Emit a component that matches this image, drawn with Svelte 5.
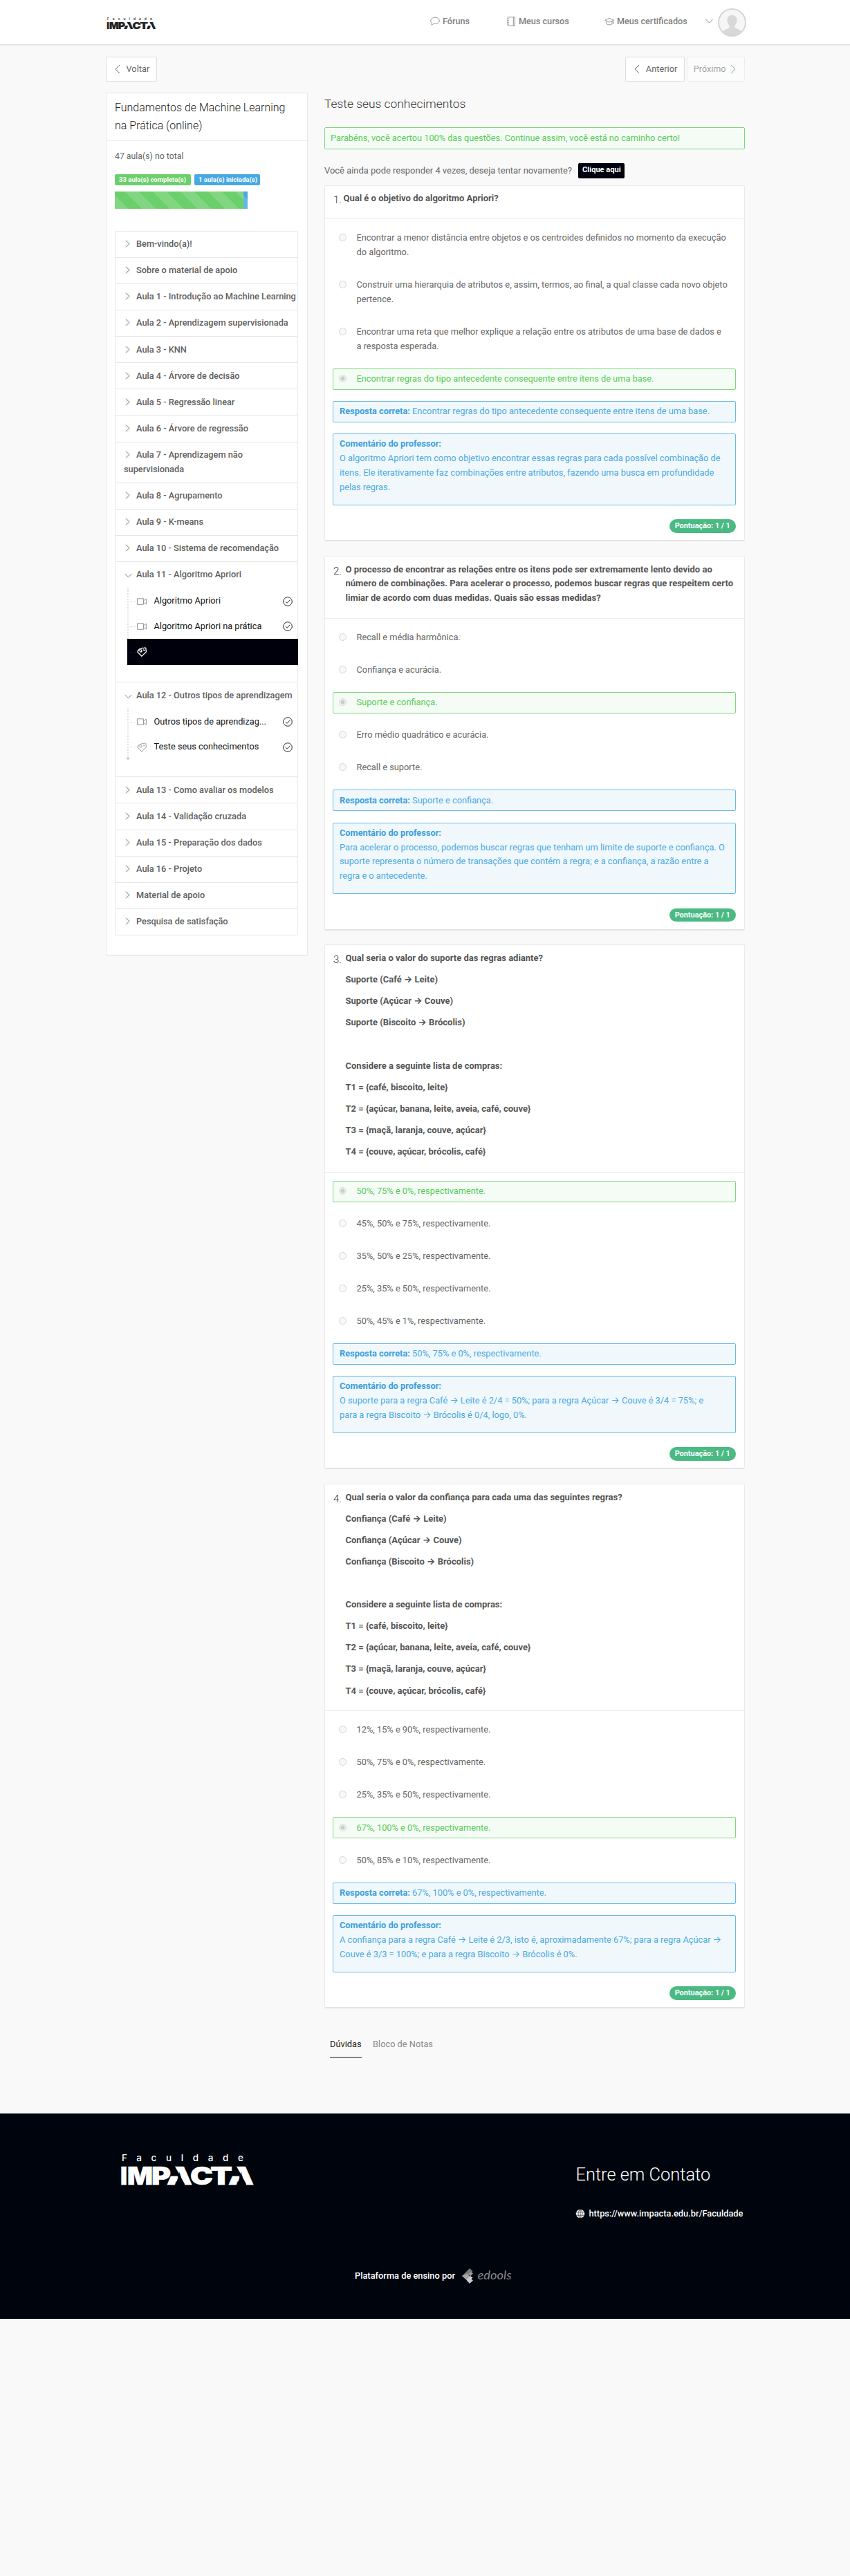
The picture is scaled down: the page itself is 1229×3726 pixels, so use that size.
<script lang="ts">
  const lessonsBefore = [
    'Bem-vindo(a)!',
    'Sobre o material de apoio',
    'Aula 1 - Introdução ao Machine Learning',
    'Aula 2 - Aprendizagem supervisionada',
    'Aula 3 - KNN',
    'Aula 4 - Árvore de decisão',
    'Aula 5 - Regressão linear',
    'Aula 6 - Árvore de regressão',
    'Aula 7 - Aprendizagem não supervisionada',
    'Aula 8 - Agrupamento',
    'Aula 9 - K-means',
    'Aula 10 - Sistema de recomendação'
  ].map((title) => ({ title, items: [] as any[] }));

  const lessonsAfter = [
    'Aula 13 - Como avaliar os modelos',
    'Aula 14 - Validação cruzada',
    'Aula 15 - Preparação dos dados',
    'Aula 16 - Projeto',
    'Material de apoio',
    'Pesquisa de satisfação'
  ].map((title) => ({ title, items: [] as any[] }));

  const modules = [
    ...lessonsBefore,
    {
      title: 'Aula 11 - Algoritmo Apriori',
      items: [
        { icon: 'video', label: 'Algoritmo Apriori', done: true },
        { icon: 'video', label: 'Algoritmo Apriori na prática', done: true },
        { icon: 'quiz', label: '', active: true }
      ]
    },
    {
      title: 'Aula 12 - Outros tipos de aprendizagem',
      last: true,
      items: [
        { icon: 'video', label: 'Outros tipos de aprendizag...', done: true },
        { icon: 'quiz', label: 'Teste seus conhecimentos', done: true }
      ]
    },
    ...lessonsAfter
  ];

  const shopping = [
    'Considere a seguinte lista de compras:',
    'T1 = {café, biscoito, leite}',
    'T2 = {açúcar, banana, leite, aveia, café, couve}',
    'T3 = {maçã, laranja, couve, açúcar}',
    'T4 = {couve, açúcar, brócolis, café}'
  ];

  const questions = [
    {
      prompt: [['Qual é o objetivo do algoritmo Apriori?']],
      options: [
        ['Encontrar a menor distância entre objetos e os centroides definidos no momento da execução', 'do algoritmo.'],
        ['Construir uma hierarquia de atributos e, assim, termos, ao final, a qual classe cada novo objeto', 'pertence.'],
        ['Encontrar uma reta que melhor explique a relação entre os atributos de uma base de dados e', 'a resposta esperada.'],
        ['Encontrar regras do tipo antecedente consequente entre itens de uma base.']
      ],
      correct: 3,
      comment: [
        'O algoritmo Apriori tem como objetivo encontrar essas regras para cada possível combinação de',
        'itens. Ele iterativamente faz combinações entre atributos, fazendo uma busca em profundidade',
        'pelas regras.'
      ]
    },
    {
      prompt: [[
        'O processo de encontrar as relações entre os itens pode ser extremamente lento devido ao',
        'número de combinações. Para acelerar o processo, podemos buscar regras que respeitem certo',
        'limiar de acordo com duas medidas. Quais são essas medidas?'
      ]],
      options: [
        ['Recall e média harmônica.'],
        ['Confiança e acurácia.'],
        ['Suporte e confiança.'],
        ['Erro médio quadrático e acurácia.'],
        ['Recall e suporte.']
      ],
      correct: 2,
      comment: [
        'Para acelerar o processo, podemos buscar regras que tenham um limite de suporte e confiança. O',
        'suporte representa o número de transações que contém a regra; e a confiança, a razão entre a',
        'regra e o antecedente.'
      ]
    },
    {
      prompt: [
        'Qual seria o valor do suporte das regras adiante?',
        'Suporte (Café → Leite)',
        'Suporte (Açúcar → Couve)',
        'Suporte (Biscoito → Brócolis)',
        '\u00a0',
        ...shopping
      ].map((p) => [p]),
      options: [
        ['50%, 75% e 0%, respectivamente.'],
        ['45%, 50% e 75%, respectivamente.'],
        ['35%, 50% e 25%, respectivamente.'],
        ['25%, 35% e 50%, respectivamente.'],
        ['50%, 45% e 1%, respectivamente.']
      ],
      correct: 0,
      comment: [
        'O suporte para a regra Café → Leite é 2/4 = 50%; para a regra Açúcar → Couve é 3/4 = 75%; e',
        'para a regra Biscoito → Brócolis é 0/4, logo, 0%.'
      ]
    },
    {
      prompt: [
        'Qual seria o valor da confiança para cada uma das seguintes regras?',
        'Confiança (Café → Leite)',
        'Confiança (Açúcar → Couve)',
        'Confiança (Biscoito → Brócolis)',
        '\u00a0',
        ...shopping
      ].map((p) => [p]),
      options: [
        ['12%, 15% e 90%, respectivamente.'],
        ['50%, 75% e 0%, respectivamente.'],
        ['25%, 35% e 50%, respectivamente.'],
        ['67%, 100% e 0%, respectivamente.'],
        ['50%, 85% e 10%, respectivamente.']
      ],
      correct: 3,
      comment: [
        'A confiança para a regra Café → Leite é 2/3, isto é, aproximadamente 67%; para a regra Açúcar →',
        'Couve é 3/3 = 100%; e para a regra Biscoito → Brócolis é 0%.'
      ]
    }
  ];

  // Wordmark letters: glyph, left edge, drawn width.
  const letters: [string, number, number][] = [
    ['I', -2, 10], ['M', 8, 37], ['P', 43, 28], ['C', 99, 33], ['T', 128, 32]
  ];
</script>

{#snippet logo()}
  <svg class="logo" viewBox="0 0 190 44" role="img" aria-label="Faculdade Impacta">
    <text class="logo-small" x="0" y="10" textLength="176">Faculdade</text>
    {#each [65, 154] as x}
      <g transform="translate({x} 0)">
        <text class="logo-big" x="0" y="44" textLength="37" lengthAdjust="spacingAndGlyphs">A</text>
        <path class="logo-cut" d="M-2 16H11L19.500 31L26 43V46H12.500L17 31.500H-2Z" />
      </g>
    {/each}
    {#each letters as [ch, x, w]}
      <text class="logo-big" {x} y="44" textLength={w} lengthAdjust="spacingAndGlyphs">{ch}</text>
    {/each}
  </svg>
{/snippet}

{#snippet chevron(dir: string)}
  <svg class="chev {dir}" viewBox="0 0 8 14"><path d="M1 1L7 7L1 13" /></svg>
{/snippet}

{#snippet lines(parts: string[])}
  {#each parts as part, i}{#if i}<br />{/if}{part}{/each}
{/snippet}

<header>
  <div class="wrap bar">
    <a class="brand" href="#top">{@render logo()}</a>
    <nav>
      <a class="forums" href="#forums">
        <svg class="ico" viewBox="0 0 14 14"><path d="M7 1.2C10.500 1.200 13.300 3.200 13.300 5.900S10.500 10.500 7 10.500C6.300 10.500 5.600 10.400 5 10.300C4.200 11.300 3 12 1.900 12.100C2.500 11.300 2.800 10.400 2.600 9.400C1.400 8.500 .7 7.300 .7 5.900C.7 3.200 3.500 1.200 7 1.200Z" /></svg>
        Fóruns
      </a>
      <a class="courses" href="#courses">
        <svg class="ico" viewBox="0 0 14 14"><path d="M2.500 .8H12.500V13.200H2.500ZM10.300 .8V13.200M1 3H3.600M1 5.700H3.600M1 8.400H3.600M1 11H3.600" /></svg>
        Meus cursos
      </a>
      <a class="certs" href="#certificates">
        <svg class="ico" viewBox="0 0 14 14"><path d="M7 2.200L13.300 5.200L7 8.200L.7 5.200ZM3 6.500V10.500C4 12.400 10 12.400 11 10.500V6.500M12.800 5.500V11" /></svg>
        Meus certificados
      </a>
      <svg class="caret" viewBox="0 0 11 7"><path d="M.5 1L5.500 6L10.500 1" /></svg>
      <svg class="avatar" viewBox="0 0 41 41">
        <circle cx="20.500" cy="20.500" r="19.500" fill="#f6f6f6" stroke="#d5d5d5" stroke-width="2" />
        <path d="M20.500 10C25.200 10 27.800 13 27.600 17.500C27.500 20.800 26 23 24.500 25V28C28 30.500 32 30.300 33.500 33.600A18 18 0 0 1 7.500 33.600C9 30.300 13 30.500 16.500 28V25C15 23 13.500 20.800 13.400 17.500C13.200 13 15.800 10 20.500 10Z" fill="#d8d8d8" />
      </svg>
    </nav>
  </div>
</header>

<div class="wrap toolbar">
  <a class="btn" href="#back">{@render chevron('left')}Voltar</a>
  <div class="pager">
    <a class="btn" href="#prev">{@render chevron('left')}Anterior</a>
    <span class="btn off">Próximo{@render chevron('right')}</span>
  </div>
</div>

<div class="wrap columns">
  <aside>
    <h2>Fundamentos de Machine Learning<br />na Prática (online)</h2>
    <div class="summary">
      <p>47 aula(s) no total</p>
      <div class="tags"><span class="tag green">33 aula(s) completa(s)</span><span class="tag blue">1 aula(s) iniciada(s)</span></div>
      <div class="progress">
        <div class="part green" style="width: 70.2%"></div>
        <div class="part blue" style="width: 2.13%"></div>
      </div>
    </div>
    <ul class="modules">
      {#each modules as m}
        <li class="module" class:open={m.items.length > 0}>
          <div class="module-head">{@render chevron(m.items.length ? 'down' : 'right')}{m.title}</div>
          {#if m.items.length}
            <ul class="lessons" class:end={'last' in m}>
              {#each m.items as it}
                <li class="lesson" class:active={it.active}>
                  {#if it.icon === 'video'}
                    <svg class="ico" viewBox="0 0 14 14"><path d="M.6 2.800H9.400V11.300H.6ZM9.400 6L13.400 3.200V11L9.400 8.300" /></svg>
                  {:else}
                    <svg class="ico" viewBox="0 0 14 14"><path d="M7 13.200L1 7.200C.4 5.600 1.800 4.500 3.400 5C4.600 5.500 4.500 7 5.700 7C7.300 6.900 7.400 5.300 6.200 4.300C5 3.200 6 1.500 7.700 1.300C8.900 1 9.700 2 10.500 1.300C11.600 .4 13.400 1 13 2.700C12.800 3.800 13.700 4.800 13.400 6.800ZM1.600 4.900L4.200 2.500L5.600 2.700M9 3.400C9.300 5 11.200 5.200 11.600 3.800" /></svg>
                  {/if}
                  <span class="lesson-name">{it.label}</span>
                  {#if it.done}
                    <svg class="check" viewBox="0 0 14 14"><circle cx="7" cy="7" r="6.300" /><path d="M4 7.200L6.100 9.300L10.200 5" /></svg>
                  {/if}
                </li>
              {/each}
            </ul>
          {/if}
        </li>
      {/each}
    </ul>
  </aside>

  <main>
    <h1>Teste seus conhecimentos</h1>
    <div class="alert">Parabéns, você acertou 100% das questões. Continue assim, você está no caminho certo!</div>
    <div class="retry">Você ainda pode responder 4 vezes, deseja tentar novamente?<a class="again" href="#retry">Clique aqui</a></div>

    {#each questions as q, n}
      <section class="question">
        <div class="prompt">
          <span class="num">{n + 1}.</span>
          <div>{#each q.prompt as p}<p>{@render lines(p)}</p>{/each}</div>
        </div>
        <div class="body">
          {#each q.options as o, i}
            <div class="option" class:right={i === q.correct}>
              <span class="radio"></span>
              <div>{@render lines(o)}</div>
            </div>
          {/each}
          <div class="note"><b>Resposta correta:</b> {@render lines(q.options[q.correct])}</div>
          <div class="note comment"><b>Comentário do professor:</b><br />{@render lines(q.comment)}</div>
          <div class="score"><span>Pontuação: 1 / 1</span></div>
        </div>
      </section>
    {/each}

    <div class="tabs"><span class="tab on">Dúvidas</span><span class="tab">Bloco de Notas</span></div>
  </main>
</div>

<footer>
  <div class="wrap foot-top">
    {@render logo()}
    <div class="contact">
      <h3>Entre em Contato</h3>
      <a href="#site">
        <svg viewBox="0 0 14 14"><circle cx="7" cy="7" r="6.500" fill="#fff" /><path d="M1 4.800H13M1 9.200H13M7 .5V13.500M7 .5C3 4 3 10 7 13.500M7 .5C11 4 11 10 7 13.500" /></svg>
        https://www.impacta.edu.br/Faculdade
      </a>
    </div>
  </div>
  <div class="powered">
    Plataforma de ensino por
    <svg viewBox="0 0 74 24">
      <path d="M12 1L16.500 5L8 14L1 12Z" fill="#777" />
      <path d="M1 12L9 8.500L11.500 12.500L7 17.500Z" fill="#a5a5a5" />
      <path d="M7 17.500L12.500 11.500L16.500 14.500L14.500 16.500L17 18.500L12 23Z" fill="#cacaca" />
      <path d="M10 9L14 6L17 8.500L13 12.500Z" fill="#999" />
      <text x="23.500" y="17" textLength="49" lengthAdjust="spacingAndGlyphs">edools</text>
    </svg>
  </div>
</footer>

<style>
  :global(body) {
    background: #f9f9f9;
    font: 400 12.8px/20.9px Roboto, Inter, "Liberation Sans", sans-serif;
    color: #666;
    -webkit-font-smoothing: antialiased;
  }
  a { color: inherit; text-decoration: none; }
  p, h1, h2, h3, ul { margin: 0; padding: 0; }
  ul { list-style: none; }
  svg { display: block; flex: none; fill: none; overflow: visible; }
  .wrap { width: 924px; margin: 0 auto; box-sizing: border-box; }

  header { height: 65px; background: #fff; border-bottom: 1px solid #ddd; box-shadow: 0 1px 1px #eee; box-sizing: border-box; }
  .bar { display: flex; justify-content: space-between; height: 64px; padding-left: 2.5px; }
  .brand { color: #222; --cut: #fff; padding-top: 25px; }
  .brand .logo { width: 70px; height: 17px; }
  .logo text { fill: currentColor; }
  .logo-small { font: 500 13.5px/1.4 Inter, sans-serif; }
  .logo-big { font: 900 36px/1.4 Inter, sans-serif; stroke: currentColor; stroke-width: .6; }
  .logo-cut { fill: var(--cut); }
  nav { display: flex; align-items: flex-start; padding-top: 21px; font-weight: 500; font-size: 12.65px; color: #808080; white-space: nowrap; }
  nav a { display: flex; align-items: center; gap: 4.5px; }
  .ico { width: 14px; height: 14px; stroke: #888; stroke-width: .9; }
  .forums { width: 110px; }
  .courses { width: 142px; }
  .certs { width: 146px; }
  .caret { width: 11px; height: 7px; margin-top: 6px; stroke: #888; stroke-width: 1; }
  .avatar { width: 41px; height: 41px; margin: -9px -2px 0 7px; }

  .toolbar { display: flex; justify-content: space-between; padding-top: 17px; }
  .pager { display: flex; gap: 3px; }
  .btn { display: flex; align-items: center; box-sizing: border-box; height: 36px; padding: 0 9.5px 0 12px; background: #fff; border: 1px solid #ddd; border-radius: 2px; }
  .btn .left { margin-right: 9px; }
  .off { opacity: .6; border-color: #e5e5e5; padding: 0 12px 0 9px; font-size: 12.6px; }
  .off .chev { margin-left: 6px; }
  .chev { width: 8px; height: 14px; stroke: #666; stroke-width: 1; }
  .left { transform: scaleX(-1); }

  .columns { display: flex; align-items: flex-start; justify-content: space-between; padding-top: 16px; }
  aside { width: 292px; box-sizing: border-box; height: 1247.500px; background: #fff; border: 1px solid #e6e6e6; border-bottom-color: #ddd; border-radius: 2px; }
  h2 { font: 300 15.97px/26px Roboto, sans-serif; color: #222; padding: 8px 0 8px 12.500px; height: 52px; border-bottom: 1px solid #eee; white-space: nowrap; }
  .summary { padding: 12px 12.500px 0; }
  .summary p { font-size: 12.300px; }
  .tags { display: flex; gap: 5px; margin-top: 15px; }
  .tag { height: 16px; border-radius: 2px; color: #fff; font: 700 9.55px/15.500px Roboto, sans-serif; padding: 0 6px; white-space: nowrap; }
  .tag.green { width: 98px; }
  .tag.blue { width: 82.500px; }
  .green { background-color: #6bd06b; }
  .blue { background-color: #48a9e2; }
  .progress { display: flex; height: 25px; margin-top: 9px; }
  .part { background-image: linear-gradient(45deg, rgba(255,255,255,.15) 25%, transparent 25%, transparent 50%, rgba(255,255,255,.15) 50%, rgba(255,255,255,.15) 75%, transparent 75%); background-size: 40px 40px; background-position: 0 -15px; }

  .modules { width: 265px; box-sizing: border-box; margin: 32px 0 0 12.500px; border: 1px solid #e8e8e8; border-radius: 2px; }
  .module { font-weight: 500; font-size: 12.77px; color: #606060; }
  .module + .module { border-top: 1px solid #e6e6e6; }
  .module-head { padding: 8.300px 0 7.900px 12px; }
  .module-head .chev { display: inline-block; vertical-align: -1px; width: 7px; height: 11px; margin: 0 9px 0 2px; stroke-width: 1.100; }
  .module-head .down { transform: rotate(90deg); width: 7px; margin: 0 8px 0 3px; vertical-align: -3px; }
  .lessons { margin-left: 17px; padding: 1.200px 0 24.300px; position: relative; }
  .lessons::before { content: ''; position: absolute; left: 0; top: 1px; height: 73px; border-left: 2px dotted #e2e2e2; }
  .lessons.end::after { content: ''; position: absolute; left: -1px; top: 71px; width: 4px; height: 4px; border-radius: 50%; background: #ccc; }
  .lesson { display: flex; align-items: center; height: 36.700px; padding: 0 7.500px 0 13.500px; font-weight: 400; font-size: 12.74px; color: #111; position: relative; }
  .lesson::before { content: ''; position: absolute; left: 4px; width: 8px; border-top: 1px dashed #ddd; }
  .lesson-name { margin-left: 11px; flex: 1; white-space: nowrap; }
  .check { width: 14px; height: 14px; stroke: #222; stroke-width: 1; }
  .active { height: 38px; background: #00000c; margin: -.5px -1px 0 0; }
  .active .ico { stroke: #fff; stroke-width: 1.300; }
  .active::before { border-color: #113; }

  main { width: 607.500px; white-space: nowrap; }
  h1 { font: 300 17.4px/26px Roboto, sans-serif; color: #333; padding-top: 2.500px; }
  .alert { box-sizing: border-box; height: 32px; margin-top: 21.500px; padding: 4.500px 8px; border: 1px solid #7fd67f; border-radius: 2px; background: #f5fcf6; color: #5c5; font-size: 12.72px; }
  .retry { display: flex; align-items: center; height: 22px; margin: 20px 0 9.500px; font-size: 12.94px; }
  .again { box-sizing: border-box; width: 67px; height: 22px; margin-left: 9.500px; background: #00000c; border-radius: 2px; color: #fff; font: 700 11.1px/20px Roboto, sans-serif; text-align: center; }

  .question { box-sizing: border-box; background: #fff; border: 1px solid #eaeaea; border-bottom: 2px solid #e4e4e4; border-radius: 2px; margin-bottom: 20.500px; }
  .prompt { display: flex; padding: 8.700px 0 7.600px 12px; border-bottom: 1px solid #ebebeb; font-weight: 700; font-size: 13px; color: #555; }
  .prompt p { margin-bottom: 10.200px; }
  .num { font: 300 15px/24px Roboto, sans-serif; color: #333; width: 17.500px; }
  .question:nth-of-type(1) .num { width: 14.500px; }
  .body { padding: 12px 12px 0 11px; }
  .option { display: flex; box-sizing: border-box; padding: 4.050px 9px 4.050px 8px; border: 1px solid transparent; border-radius: 2px; margin-bottom: 16.100px; font-size: 12.8px; }
  .radio { box-sizing: border-box; width: 11px; height: 11px; margin: 4px 14.500px 0 0; border: 1px solid #d6d6d6; border-radius: 50%; background: #f8f8f8; }
  .right { border-color: #7fd67f; background: #f5fcf6; color: #5c5; }
  .right .radio { background: radial-gradient(circle, #ccc 0 2.800px, #f6f6f6 3.500px); }
  .note { padding: 4.050px 9px; margin-bottom: 16.100px; border: 1px solid #68b8e8; border-radius: 2px; background: #f1f8fc; color: #48a9e2; font-size: 12.8px; }
  .note b { color: #3aa0de; }
  .comment { padding-bottom: 14px; margin-bottom: 20.600px; }
  .score { display: flex; justify-content: flex-end; height: 30px; }
  .score span { box-sizing: border-box; width: 95.500px; height: 19.500px; border-radius: 10px; background: #4aba82; color: #fff; font: 700 10.9px/19px Roboto, sans-serif; text-align: center; }

  .tabs { display: flex; gap: 16.500px; padding: 18px 8px 0; height: 113px; }
  .tab { height: 31px; line-height: 25px; color: #888; }
  .on { color: #222; border-bottom: 2px solid #888490; }

  footer { background: #00040c; height: 297px; color: #fff; --cut: #00040c; overflow: hidden; }
  .foot-top { display: flex; justify-content: space-between; align-items: flex-start; height: 176px; padding: 59px 0 0 23px; }
  footer .logo { width: 190px; height: 44px; }
  .contact { width: 245px; white-space: nowrap; }
  h3 { font: 300 25.4px/36px Roboto, sans-serif; padding: 11.500px 0 0 1px; }
  .contact a { display: flex; align-items: center; gap: 6px; margin-top: 28.500px; font-weight: 500; font-size: 12.8px; }
  .contact a svg { width: 14px; height: 14px; stroke: #00040c; stroke-width: .6; }
  .powered { display: flex; justify-content: center; align-items: center; gap: 9px; margin-top: 47.500px; padding-left: 25px; font-weight: 500; font-size: 12.83px; }
  .powered svg { width: 74px; height: 24px; }
  .powered text { font: italic 400 17px Lato, sans-serif; fill: #888; }
</style>
